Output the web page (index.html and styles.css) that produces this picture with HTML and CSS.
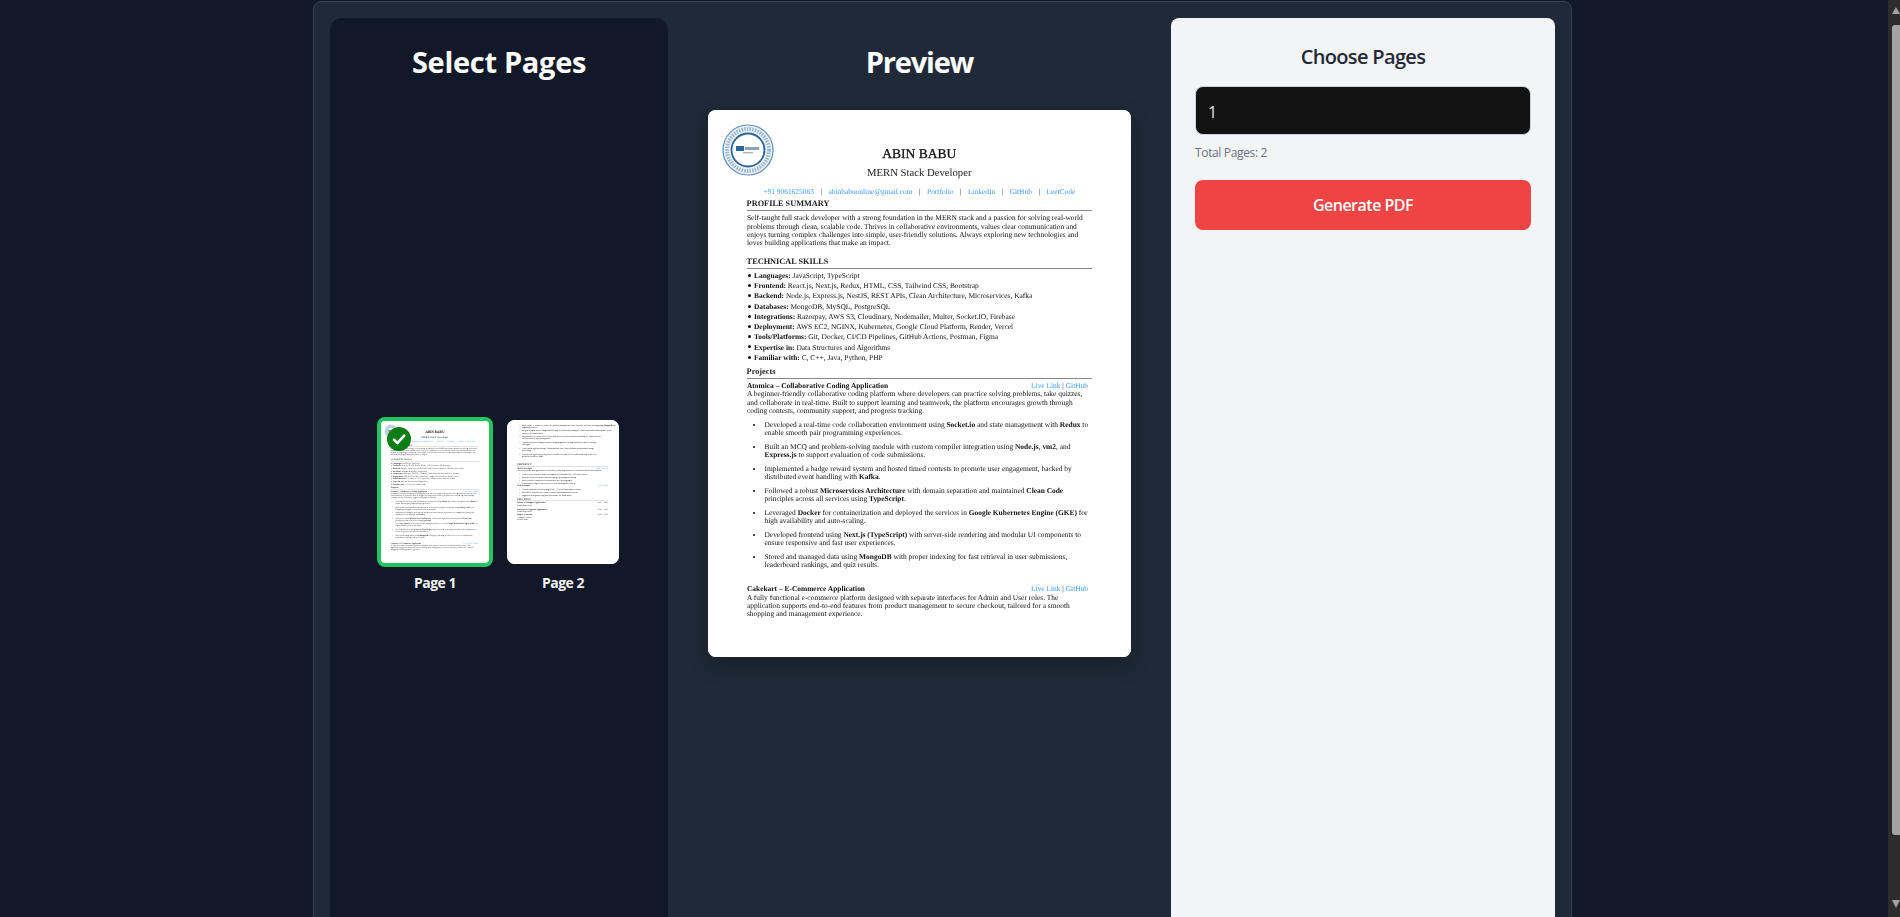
FILE: index.html
```html
<!DOCTYPE html>
<html lang="en">
<head>
<meta charset="utf-8">
<title>Select Pages</title>
<link rel="stylesheet" href="styles.css">
</head>
<body>
<div class="shell">
  <main class="app">
    <section class="panel-pages">
      <h2 class="title title-select">Select Pages</h2>
      <div class="thumbs">
        <div class="thumb-item">
          <div class="thumb-slot">
            <div class="thumb thumb-selected">
              <div class="thumb-scale">
                <article class="resume">
                  <svg class="logo" viewBox="0 0 52 52"><circle cx="26" cy="26" r="25" fill="#eef3f8" stroke="#5f8db9" stroke-width="1.2"/><circle cx="26" cy="26" r="21" fill="none" stroke="#9db8d4" stroke-width="4" stroke-dasharray="1.6 1.1"/><circle cx="26" cy="26" r="16.5" fill="#fff" stroke="#2a6496" stroke-width="1.8"/><rect x="14" y="22" width="8" height="5" fill="#2a6496"/><rect x="23" y="23" width="14" height="3" fill="#8fa3b8"/><rect x="21" y="28" width="10" height="1.5" fill="#a9b8c8"/></svg>
                  <header class="r-head"><h1>ABIN BABU</h1><p class="r-role">MERN Stack Developer</p>
                    <p class="r-contact"><a>+91 9061625083</a><i>|</i><a>abinbabuonline@gmail.com</a><i>|</i><a>Portfolio</a><i>|</i><a>LinkedIn</a><i>|</i><a>GitHub</a><i>|</i><a>LeetCode</a></p></header>
                  <h3 class="r-h">PROFILE SUMMARY</h3>
                  <p class="r-p">Self-taught full stack developer with a strong foundation in the MERN stack and a passion for solving real-world<br>problems through clean, scalable code. Thrives in collaborative environments, values clear communication and<br>enjoys turning complex challenges into simple, user-friendly solutions. Always exploring new technologies and<br>loves building applications that make an impact.</p>
                  <h3 class="r-h r-h-skills">TECHNICAL SKILLS</h3>
                  <ul class="r-skills">
                    <li><b>Languages:</b> JavaScript, TypeScript</li>
                    <li><b>Frontend:</b> React.js, Next.js, Redux, HTML, CSS, Tailwind CSS, Bootstrap</li>
                    <li><b>Backend:</b> Node.js, Express.js, NestJS, REST APIs, Clean Architecture, Microservices, Kafka</li>
                    <li><b>Databases:</b> MongoDB, MySQL, PostgreSQL</li>
                    <li><b>Integrations:</b> Razorpay, AWS S3, Cloudinary, Nodemailer, Multer, Socket.IO, Firebase</li>
                    <li><b>Deployment:</b> AWS EC2, NGINX, Kubernetes, Google Cloud Platform, Render, Vercel</li>
                    <li><b>Tools/Platforms:</b> Git, Docker, CI/CD Pipelines, GitHub Actions, Postman, Figma</li>
                    <li><b>Expertise in:</b> Data Structures and Algorithms</li>
                    <li><b>Familiar with:</b> C, C++, Java, Python, PHP</li>
                  </ul>
                  <h3 class="r-h r-h-projects">Projects</h3>
                  <div class="r-proj"><b>Atomica – Collaborative Coding Application</b><span class="r-links"><a>Live Link</a> | <a>GitHub</a></span></div>
                  <p class="r-p">A beginner-friendly collaborative coding platform where developers can practice solving problems, take quizzes,<br>and collaborate in real-time. Built to support learning and teamwork, the platform encourages growth through<br>coding contests, community support, and progress tracking.</p>
                  <ul class="r-bullets">
                    <li>Developed a real-time code collaboration environment using <b>Socket.io</b> and state management with <b>Redux</b> to<br>enable smooth pair programming experiences.</li>
                    <li>Built an MCQ and problem-solving module with custom compiler integration using <b>Node.js</b>, <b>vm2</b>, and<br><b>Express.js</b> to support evaluation of code submissions.</li>
                    <li>Implemented a badge reward system and hosted timed contests to promote user engagement, backed by<br>distributed event handling with <b>Kafka</b>.</li>
                    <li>Followed a robust <b>Microservices Architecture</b> with domain separation and maintained <b>Clean Code</b><br>principles across all services using <b>TypeScript</b>.</li>
                    <li>Leveraged <b>Docker</b> for containerization and deployed the services in <b>Google Kubernetes Engine (GKE)</b> for<br>high availability and auto-scaling.</li>
                    <li>Developed frontend using <b>Next.js (TypeScript)</b> with server-side rendering and modular UI components to<br>ensure responsive and fast user experiences.</li>
                    <li>Stored and managed data using <b>MongoDB</b> with proper indexing for fast retrieval in user submissions,<br>leaderboard rankings, and quiz results.</li>
                  </ul>
                  <div class="r-proj r-proj-next"><b>Cakekart – E-Commerce Application</b><span class="r-links"><a>Live Link</a> | <a>GitHub</a></span></div>
                  <p class="r-p">A fully functional e-commerce platform designed with separate interfaces for Admin and User roles. The<br>application supports end-to-end features from product management to secure checkout, tailored for a smooth<br>shopping and management experience.</p>
                </article>
              </div>
              <span class="check"><svg viewBox="0 0 24 24" class="check-icon"><path d="M7 12.6l3.4 3.4 6.8-7.4" fill="none" stroke="#fff" stroke-width="2.6" stroke-linecap="round" stroke-linejoin="round"/></svg></span>
            </div>
          </div>
          <div class="thumb-label">Page 1</div>
        </div>
        <div class="thumb-item">
          <div class="thumb-slot">
            <div class="thumb">
              <div class="thumb-scale">
                <article class="resume resume-two">
                  <ul class="r-bullets">
                    <li>Built scalable e-commerce features for product management, secure checkout, and order tracking using <b>MongoDB</b> and<br><b>Express.js</b> services.</li>
                    <li>Integrated payment processing with Razorpay and webhook handling for reliable transaction status updates across<br>customer and admin flows.</li>
                    <li>Implemented role-based access control with protected routes and token handling for Admin and User<br>interfaces with session management.</li>
                    <li>Optimized product listing performance using pagination, caching and indexed queries on large<br>catalogues.</li>
                    <li>Added media uploads through Cloudinary with server-side validation and automated image<br>processing.</li>
                    <li>Deployed the application using Docker containers behind NGINX with monitoring in place for<br>production traffic on <b>AWS</b>.</li>
                  </ul>
                  <h3 class="r-h r-h-exp">EXPERIENCE</h3>
                  <div class="r-proj"><b>MERN Developer</b><span class="r-links"><a>2024 – Present</a></span></div>
                  <p class="r-p">Worked on production applications for customers, delivering features across frontend and backend systems.</p>
                  <ul class="r-bullets r-bullets-tight">
                    <li>Delivered new customer features using React, Redux and REST APIs with reviews.</li>
                    <li>Improved backend response times through query tuning and caching.</li>
                    <li>Wrote reusable components for dashboards and reporting pages.</li>
                    <li>Worked with designers and testers on release planning and delivery.</li>
                  </ul>
                  <div class="r-proj"><b>Web Developer</b><span class="r-links"><a>2023 – 2024</a></span></div>
                  <ul class="r-bullets r-bullets-tight">
                    <li>Created responsive websites using HTML, CSS, and JavaScript for clients.</li>
                    <li>Built REST endpoints for content, enquiries and administration screens.</li>
                    <li>Supported deployments, bug fixes and routine site maintenance.</li>
                  </ul>
                  <h3 class="r-h">EDUCATION</h3>
                  <div class="r-proj"><b>Master of Computer Applications</b><span class="r-links">2021 – 2023</span></div>
                  <p class="r-p">University, Kerala</p>
                  <div class="r-proj r-proj-gap"><b>Bachelor of Computer Applications</b><span class="r-links">2018 – 2021</span></div>
                  <p class="r-p">University, Kerala</p>
                  <div class="r-proj r-proj-gap"><b>Higher Secondary</b><span class="r-links">2016 – 2018</span></div>
                  <p class="r-p">Computer Science<br>Kerala, India</p>
                </article>
              </div>
            </div>
          </div>
          <div class="thumb-label">Page 2</div>
        </div>
      </div>
    </section>

    <section class="panel-preview">
      <h2 class="title title-preview">Preview</h2>
      <div class="preview-card">
        <article class="resume">
          <svg class="logo" viewBox="0 0 52 52"><circle cx="26" cy="26" r="25" fill="#eef3f8" stroke="#5f8db9" stroke-width="1.2"/><circle cx="26" cy="26" r="21" fill="none" stroke="#9db8d4" stroke-width="4" stroke-dasharray="1.6 1.1"/><circle cx="26" cy="26" r="16.5" fill="#fff" stroke="#2a6496" stroke-width="1.8"/><rect x="14" y="22" width="8" height="5" fill="#2a6496"/><rect x="23" y="23" width="14" height="3" fill="#8fa3b8"/><rect x="21" y="28" width="10" height="1.5" fill="#a9b8c8"/></svg>
          <header class="r-head"><h1>ABIN BABU</h1><p class="r-role">MERN Stack Developer</p>
            <p class="r-contact"><a>+91 9061625083</a><i>|</i><a>abinbabuonline@gmail.com</a><i>|</i><a>Portfolio</a><i>|</i><a>LinkedIn</a><i>|</i><a>GitHub</a><i>|</i><a>LeetCode</a></p></header>
          <h3 class="r-h">PROFILE SUMMARY</h3>
          <p class="r-p">Self-taught full stack developer with a strong foundation in the MERN stack and a passion for solving real-world<br>problems through clean, scalable code. Thrives in collaborative environments, values clear communication and<br>enjoys turning complex challenges into simple, user-friendly solutions. Always exploring new technologies and<br>loves building applications that make an impact.</p>
          <h3 class="r-h r-h-skills">TECHNICAL SKILLS</h3>
          <ul class="r-skills">
            <li><b>Languages:</b> JavaScript, TypeScript</li>
            <li><b>Frontend:</b> React.js, Next.js, Redux, HTML, CSS, Tailwind CSS, Bootstrap</li>
            <li><b>Backend:</b> Node.js, Express.js, NestJS, REST APIs, Clean Architecture, Microservices, Kafka</li>
            <li><b>Databases:</b> MongoDB, MySQL, PostgreSQL</li>
            <li><b>Integrations:</b> Razorpay, AWS S3, Cloudinary, Nodemailer, Multer, Socket.IO, Firebase</li>
            <li><b>Deployment:</b> AWS EC2, NGINX, Kubernetes, Google Cloud Platform, Render, Vercel</li>
            <li><b>Tools/Platforms:</b> Git, Docker, CI/CD Pipelines, GitHub Actions, Postman, Figma</li>
            <li><b>Expertise in:</b> Data Structures and Algorithms</li>
            <li><b>Familiar with:</b> C, C++, Java, Python, PHP</li>
          </ul>
          <h3 class="r-h r-h-projects">Projects</h3>
          <div class="r-proj"><b>Atomica – Collaborative Coding Application</b><span class="r-links"><a>Live Link</a> | <a>GitHub</a></span></div>
          <p class="r-p">A beginner-friendly collaborative coding platform where developers can practice solving problems, take quizzes,<br>and collaborate in real-time. Built to support learning and teamwork, the platform encourages growth through<br>coding contests, community support, and progress tracking.</p>
          <ul class="r-bullets">
            <li>Developed a real-time code collaboration environment using <b>Socket.io</b> and state management with <b>Redux</b> to<br>enable smooth pair programming experiences.</li>
            <li>Built an MCQ and problem-solving module with custom compiler integration using <b>Node.js</b>, <b>vm2</b>, and<br><b>Express.js</b> to support evaluation of code submissions.</li>
            <li>Implemented a badge reward system and hosted timed contests to promote user engagement, backed by<br>distributed event handling with <b>Kafka</b>.</li>
            <li>Followed a robust <b>Microservices Architecture</b> with domain separation and maintained <b>Clean Code</b><br>principles across all services using <b>TypeScript</b>.</li>
            <li>Leveraged <b>Docker</b> for containerization and deployed the services in <b>Google Kubernetes Engine (GKE)</b> for<br>high availability and auto-scaling.</li>
            <li>Developed frontend using <b>Next.js (TypeScript)</b> with server-side rendering and modular UI components to<br>ensure responsive and fast user experiences.</li>
            <li>Stored and managed data using <b>MongoDB</b> with proper indexing for fast retrieval in user submissions,<br>leaderboard rankings, and quiz results.</li>
          </ul>
          <div class="r-proj r-proj-next"><b>Cakekart – E-Commerce Application</b><span class="r-links"><a>Live Link</a> | <a>GitHub</a></span></div>
          <p class="r-p">A fully functional e-commerce platform designed with separate interfaces for Admin and User roles. The<br>application supports end-to-end features from product management to secure checkout, tailored for a smooth<br>shopping and management experience.</p>
        </article>
      </div>
    </section>

    <aside class="panel-choose">
      <h2 class="choose-title">Choose Pages</h2>
      <input class="choose-input" type="text" value="1" aria-label="Pages">
      <p class="choose-total">Total Pages: 2</p>
      <button class="choose-button" type="button">Generate PDF</button>
    </aside>
  </main>
  <div class="scrollbar">
    <span class="sb-up"></span>
    <span class="sb-thumb"></span>
    <span class="sb-down"></span>
  </div>
</div>
</body>
</html>
```
FILE: styles.css
```css
* { box-sizing: border-box; }
html, body { margin: 0; height: 100%; overflow: hidden; }
body { background: #111827; font-family: "Open Sans", "Noto Sans", sans-serif; color: #fff; }
h1, h2, h3, p, ul { margin: 0; padding: 0; }

.shell { display: flex; height: 917px; padding-left: 313px; justify-content: space-between; overflow: hidden; }

.app {
  width: 1259px; height: 1100px; margin-top: 1px; padding: 16px 16px;
  display: grid; grid-template-columns: 338px 503px 384px;
  background: #1f2937; border: 1px solid #374151; border-radius: 8px;
}

.title { font-size: 29px; line-height: 40px; font-weight: 700; color: #fff; text-align: center; }
.title-select { letter-spacing: -.3px; }
.title-preview { letter-spacing: -1.2px; }

.panel-pages { background: #111827; border-radius: 12px; padding-top: 24px; }
.thumbs { display: flex; justify-content: center; gap: 14px; margin-top: 335px; padding-right: 2px; }
.thumb-item { display: flex; flex-direction: column; align-items: center; }
.thumb-slot { height: 150px; display: flex; align-items: center; }
.thumb { position: relative; width: 112px; height: 144px; background: #fff; border-radius: 8px; overflow: hidden; }
.thumb-selected { width: 116px; height: 150px; border: 4px solid #22c55e; }
.thumb-scale { width: 423px; height: 547px; transform: scale(0.2648); transform-origin: 0 0; filter: blur(1.4px); }
.thumb-selected .thumb-scale { transform: scale(0.2553); }
.check { position: absolute; left: 6px; top: 6px; width: 24px; height: 24px; border-radius: 50%; background: #0a7d14; display: flex; }
.check-icon { width: 24px; height: 24px; }
.thumb-label { margin-top: 6px; font-size: 14px; line-height: 20px; font-weight: 700; color: #f3f4f6; letter-spacing: -.5px; }

.panel-preview { padding-top: 24px; display: flex; flex-direction: column; align-items: center; }
.preview-card { width: 423px; height: 547px; margin-top: 28px; background: #fff; border-radius: 8px; box-shadow: 0 8px 20px rgba(0,0,0,.25); overflow: hidden; }

.resume {
  position: relative; width: 423px; height: 547px; padding: 36px 39px 0 38.6px;
  font-family: "Liberation Serif", serif; font-size: 7.43px; line-height: 8.3px; color: #111;
  text-rendering: geometricPrecision; filter: blur(0.3px); background: #fff;
}
.resume-two { padding-top: 9px; }
.logo { position: absolute; left: 14px; top: 14px; width: 52px; height: 52px; }
.r-head { text-align: center; }
.r-head h1 { font-size: 13.5px; line-height: 16px; font-weight: 400; color: #111; -webkit-text-stroke: .3px #111; }
.r-role { font-size: 10.7px; line-height: 13px; margin-top: 4.5px; color: #222; }
.r-contact { font-size: 7.43px; line-height: 9px; margin-top: 7px; color: #3b9bff; white-space: nowrap; }
.r-contact i { font-style: normal; color: #222; margin: 0 6.5px; }
.r-h { font-size: 8.3px; line-height: 10px; font-weight: 700; color: #222; margin-top: 3.8px; padding-bottom: 1px; border-bottom: 1px solid #888; }
.r-h-skills { margin-top: 9.6px; }
.r-h-projects { margin-top: 4.2px; }
.r-h-exp { margin-top: 22px; }
.r-p { margin-top: 3px; margin-left: .4px; }
.r-skills { list-style: none; margin-top: 2px; }
.r-skills li { line-height: 10.2px; }
.r-skills li::before { content: ""; display: inline-block; width: 3px; height: 3px; margin: 0 3px 0 1.4px; vertical-align: 1.2px; border-radius: 50%; background: #111; }
.r-proj { display: flex; justify-content: space-between; margin-top: 3px; padding: 0 4px 0 .4px; line-height: 8.3px; }
.r-proj + .r-p { margin-top: 0; }
.r-proj-next { margin-top: 16px; }
.r-proj-gap { margin-top: 6px; }
.r-links { color: #222; }
.r-links a { color: #3b9bff; }
.r-bullets { margin-top: 5.6px; padding-left: 17.9px; }
.r-bullets li { margin-bottom: 5.4px; white-space: nowrap; }
.r-bullets-tight li { margin-bottom: 3px; }

.panel-choose { background: #f3f4f6; border-radius: 8px; padding: 0 24px; display: flex; flex-direction: column; }
.choose-title { margin-top: 25px; font-size: 20px; line-height: 28px; font-weight: 600; color: #1f2937; text-align: center; letter-spacing: -.65px; }
.choose-input {
  margin: 15px 0 0; height: 49px; padding: 2px 12px 0; background: #121212; color: #e5e7eb;
  border: 1px solid #d1d5db; border-radius: 8px; font: 400 16px "Open Sans", sans-serif; outline: none;
}
.choose-total { margin-top: 8px; font-size: 12px; line-height: 20px; color: #6b7280; letter-spacing: -.35px; }
.choose-button {
  margin-top: 17px; height: 50px; border: 0; border-radius: 8px; background: #ef4444; color: #fff;
  font: 600 16px "Open Sans", sans-serif; letter-spacing: -.5px;
}

.scrollbar { width: 12px; height: 917px; background: #2c2c2c; display: flex; flex-direction: column; align-items: flex-end; }
.sb-up { width: 0; height: 0; margin: 7px 0 11px; border-left: 4.5px solid transparent; border-right: 4.5px solid transparent; border-bottom: 7px solid #a3a3a3; }
.sb-thumb { width: 8px; height: 810px; border-radius: 3px 0 0 3px; background: #a3a3a3; }
.sb-down { width: 0; height: 0; margin-top: 65px; border-left: 4.5px solid transparent; border-right: 4.5px solid transparent; border-top: 8px solid #a3a3a3; }
```
